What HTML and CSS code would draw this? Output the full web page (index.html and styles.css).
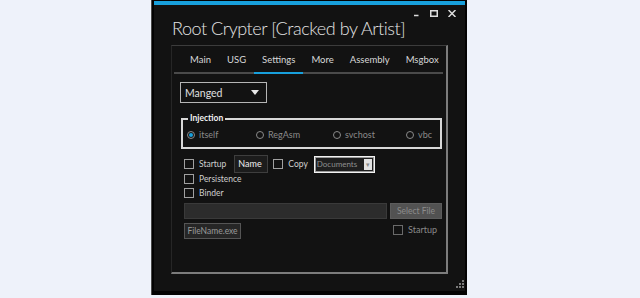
FILE: index.html
```html
<!DOCTYPE html>
<html lang="en">
<head>
    <meta charset="UTF-8">
    <title>Root Crypter</title>
    <link rel="stylesheet" href="styles.css">
</head>
<body>
    <div class="window">
        <div class="frame">
            <div class="caption-buttons">
                <svg width="8" height="7" viewBox="0 0 8 7"><path d="M2 5.5H6.5" stroke="#ddd" stroke-width="1.5"/></svg>
                <svg width="8" height="7" viewBox="0 0 8 7"><rect x="0.75" y="0.75" width="6.5" height="5.5" fill="none" stroke="#ddd" stroke-width="1.5"/></svg>
                <svg width="8" height="7" viewBox="0 0 8 7"><path d="M0.5 0L7.5 7M7.5 0L0.5 7" stroke="#ddd" stroke-width="1.5"/></svg>
            </div>
            <h1 class="title">Root Crypter [Cracked by Artist]</h1>

            <div class="tab-control">
                <ul class="tabs">
                    <li>Main</li>
                    <li>USG</li>
                    <li class="active">Settings</li>
                    <li>More</li>
                    <li>Assembly</li>
                    <li>Msgbox</li>
                </ul>

                <div class="tab-page">
                    <div class="combo">
                        <span>Manged</span>
                        <span class="combo-arrow"></span>
                    </div>

                    <div class="group">
                        <span class="group-label">Injection</span>
                        <div class="radios">
                            <label class="radio checked"><span class="dot"></span>itself</label>
                            <label class="radio"><span class="dot"></span>RegAsm</label>
                            <label class="radio"><span class="dot"></span>svchost</label>
                            <label class="radio"><span class="dot"></span>vbc</label>
                        </div>
                    </div>

                    <div class="row">
                        <label class="check"><span class="box"></span>Startup</label>
                        <div class="name-box">Name</div>
                        <label class="check"><span class="box"></span>Copy</label>
                        <div class="folder-combo">
                            <span class="folder-text">Documents</span>
                            <span class="folder-arrow">&#9662;</span>
                        </div>
                    </div>
                    <label class="check line first"><span class="box"></span>Persistence</label>
                    <label class="check line"><span class="box"></span>Binder</label>

                    <div class="file-row top">
                        <div class="path-box"></div>
                        <div class="btn select">Select File</div>
                    </div>
                    <div class="file-row bottom">
                        <div class="btn filename">FileName.exe</div>
                        <label class="check dim"><span class="box"></span>Startup</label>
                    </div>
                </div>
            </div>

            <svg class="grip" width="10" height="10" viewBox="0 0 10 10">
                <rect x="7" y="1" width="2" height="2" fill="#7a7a7a"/>
                <rect x="4" y="4" width="2" height="2" fill="#7a7a7a"/>
                <rect x="7" y="4" width="2" height="2" fill="#7a7a7a"/>
                <rect x="1" y="7" width="2" height="2" fill="#7a7a7a"/>
                <rect x="4" y="7" width="2" height="2" fill="#7a7a7a"/>
                <rect x="7" y="7" width="2" height="2" fill="#7a7a7a"/>
            </svg>
        </div>
    </div>
</body>
</html>
```

FILE: styles.css
```css
body {
    margin: 0;
    background: #eef2fa;
    font-family: 'Lato', 'Open Sans', sans-serif;
}
.window {
    margin-left: 151px;
    width: 316px;
    height: 295px;
    box-sizing: border-box;
    background: #030303;
    border-left: 1px solid #4a4a4a;
    padding: 1px 2px 4px 2px;
}
.frame {
    position: relative;
    height: 100%;
    box-sizing: border-box;
    background: #121212;
    border-top: 4px solid #18a0dc;
}
.caption-buttons {
    display: flex;
    justify-content: flex-end;
    gap: 10px;
    padding: 5px 9px 0 0;
    height: 7px;
}
.title {
    margin: 0 0 0 18px;
    font-size: 18px;
    font-weight: 300;
    line-height: 22px;
    letter-spacing: -0.45px;
    color: #e4e4e4;
    white-space: nowrap;
}
.tab-control {
    margin: 6px 0 0 17px;
    width: 277px;
    height: 229px;
    box-sizing: border-box;
    border-top: 1px solid #3c3c3c;
    border-left: 1px solid #262626;
    border-right: 2px solid #7c7c7c;
    border-bottom: 2px solid #7c7c7c;
}
.tabs {
    display: flex;
    margin: 0 3px 0 2px;
    padding: 6px 0 0 8px;
    list-style: none;
    border-bottom: 2px solid #4a4a4a;
}
.tabs li {
    padding: 0 8px 4px;
    margin-bottom: -2px;
    font-size: 9.5px;
    line-height: 16px;
    color: #d8d8d8;
    border-bottom: 2px solid transparent;
}
.tabs li.active {
    border-bottom-color: #18a0dc;
}
.tab-page {
    padding: 8px 0 0 8px;
    font-size: 8.5px;
}
.combo {
    display: flex;
    align-items: center;
    justify-content: space-between;
    width: 87px;
    height: 21px;
    box-sizing: border-box;
    padding: 0 7px 0 4px;
    border: 1px solid #b5b5b5;
    font-size: 10.5px;
    color: #e0e0e0;
}
.combo-arrow {
    width: 0;
    height: 0;
    border-left: 4px solid transparent;
    border-right: 4px solid transparent;
    border-top: 5px solid #e8e8e8;
}
.group {
    position: relative;
    margin: 15px 0 0 1px;
    width: 261px;
    height: 31px;
    box-sizing: border-box;
    border: 2px solid #d8d8d8;
}
.group-label {
    position: absolute;
    left: 5px;
    top: -8px;
    padding: 0 2px;
    background: #121212;
    font-size: 8.5px;
    font-weight: 700;
    line-height: 12px;
    color: #f0f0f0;
}
.radios {
    display: grid;
    grid-template-columns: 69px 77px 73px auto;
    padding: 9px 0 0 4px;
}
.radio {
    display: flex;
    align-items: center;
    gap: 4px;
    color: #8a8a8a;
    font-size: 9px;
    line-height: 12px;
}
.radio .dot {
    position: relative;
    width: 6px;
    height: 6px;
    border: 1px solid #8a8a8a;
    border-radius: 50%;
}
.radio.checked .dot::after {
    content: '';
    position: absolute;
    left: 1px;
    top: 1px;
    width: 4px;
    height: 4px;
    border-radius: 50%;
    background: #18a0dc;
}
.row {
    display: flex;
    align-items: center;
    margin: 6px 0 0 4px;
    height: 18px;
}
.check {
    display: flex;
    align-items: center;
    gap: 5px;
    color: #cfcfcf;
    line-height: 14px;
}
.check .box {
    width: 8px;
    height: 8px;
    border: 1px solid #a0a0a0;
}
.check.line {
    margin-left: 4px;
}
.check.first {
    margin-top: -1px;
}
.check.dim {
    color: #8a8a8a;
}
.check.dim .box {
    border-color: #6a6a6a;
}
.name-box {
    margin: 0 5px 0 8px;
    width: 34px;
    height: 18px;
    box-sizing: border-box;
    padding-left: 3px;
    background: #1c1c1c;
    border: 1px solid #3e3e3e;
    color: #f0f0f0;
    font-size: 9px;
    line-height: 16px;
}
.folder-combo {
    display: flex;
    justify-content: space-between;
    align-items: center;
    margin-left: 6px;
    width: 61px;
    height: 17px;
    box-sizing: border-box;
    border: 1px solid #f2f2f2;
    box-shadow: inset 0 0 0 1px #9a9a9a;
    background: #1e1e1e;
    padding: 0 2px;
    color: #8f8f8f;
    font-size: 8px;
}
.folder-arrow {
    width: 8px;
    height: 11px;
    background: #e2e2e2;
    color: #8a8a8a;
    font-size: 7px;
    line-height: 11px;
    text-align: center;
}
.file-row {
    display: flex;
    align-items: center;
    justify-content: space-between;
    margin: 0 4px 0 4px;
}
.file-row.top {
    margin-top: 3px;
}
.file-row.bottom {
    margin-top: 4px;
    align-items: flex-start;
}
.path-box {
    width: 203px;
    height: 16px;
    box-sizing: border-box;
    background: #2c2c2c;
    border: 1px solid #3a3a3a;
}
.btn {
    height: 16px;
    box-sizing: border-box;
    font-size: 8.5px;
    line-height: 14px;
    text-align: center;
}
.btn.select {
    width: 52px;
    background: #525252;
    border: 1px solid #5c5c5c;
    color: #8c8c8c;
}
.btn.filename {
    width: 57px;
    background: #262626;
    border: 1px solid #555;
    color: #9a9a9a;
}
.file-row .check.dim {
    margin: 0 5px 0 auto;
    font-size: 9px;
}
.grip {
    position: absolute;
    right: 0;
    bottom: 2px;
}
```
